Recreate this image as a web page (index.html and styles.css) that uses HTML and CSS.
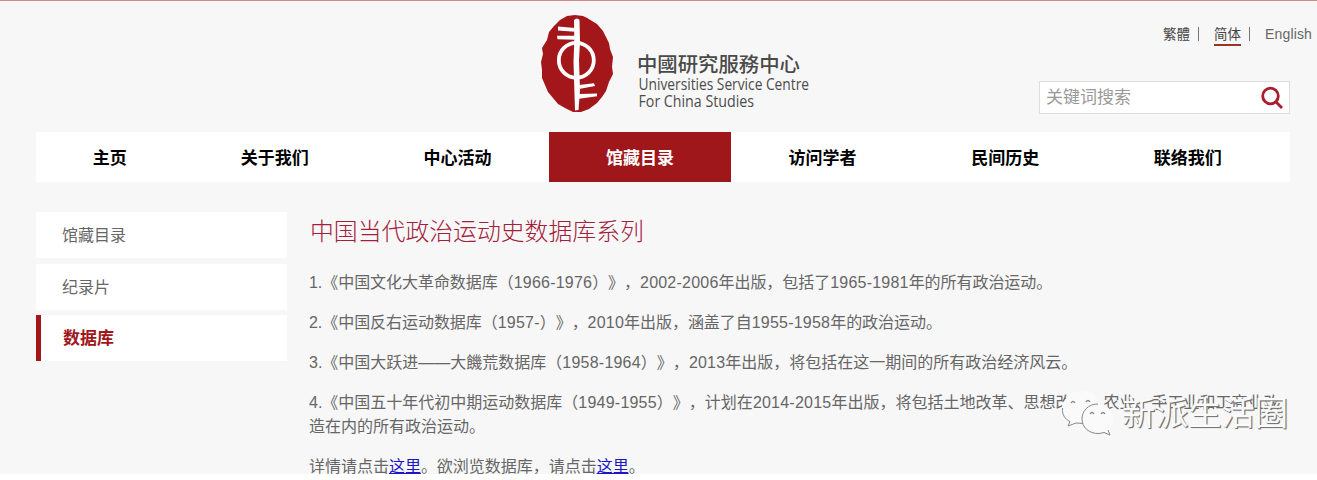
FILE: index.html
```html
<!DOCTYPE html>
<html lang="zh-CN">
<head>
<meta charset="utf-8">
<title>中国当代政治运动史数据库系列</title>
<link rel="stylesheet" href="styles.css">
</head>
<body>
<div class="page">
  <header class="header">
    <svg class="logo" width="290" height="110" viewBox="530 8 290 110">
      <path class="seal" d="M575 15 L583 16 Q588 18 592 21 L597 24 L603 31 L606 37 L609 43 L610 49 L613 57 L612 67 L613 74 L609 82 L606 91 L602 97 L597 103 L589 109 L581 112 L573 112 L565 108 L558 104 L553 98 L548 92 L545 85 L542 78 L542 70 L541 62 L543 54 L542 48 L547 40 L549 32 L554 26 L560 20 L567 16Z"/>
      <circle class="ring" cx="576.3" cy="60.3" r="17.5"/>
      <path class="mark" d="M574 20 Q577 17 579.5 20 L580 42 L579 60 L580 90 L578.5 110 L575 110.5 L574.3 88 L573.5 62 L574.3 40Z M558 26.5 L575 28 L575 31.8 L558 30.6Z M557 35.8 L575 35.5 L575 39.8 L557.5 39.3Z M579 85 L594 83.2 L595 86 L579 89Z M579 94 L597 93.6 L597 96.2 L579 98.8Z"/>
      <text class="logo-zh" x="637" y="72" textLength="163" lengthAdjust="spacingAndGlyphs">中國研究服務中心</text>
      <text class="logo-en" x="638.5" y="89.5" textLength="170.5" lengthAdjust="spacingAndGlyphs">Universities Service Centre</text>
      <text class="logo-en" x="638.5" y="106.5" textLength="115.5" lengthAdjust="spacingAndGlyphs">For China Studies</text>
    </svg>
    <div class="tools">
      <div class="langs"><a>繁體</a><i></i><a class="current">简体</a><i></i><a class="english">English</a></div>
      <div class="search"><span>关键词搜索</span>
        <svg width="24" height="24" viewBox="0 0 24 24"><circle cx="10.5" cy="10" r="7.8"/><path d="M16 16 L22 22"/></svg>
      </div>
    </div>
  </header>
  <nav class="nav">
    <a class="home">主页</a><a>关于我们</a><a>中心活动</a><a class="active">馆藏目录</a><a>访问学者</a><a>民间历史</a><a>联络我们</a>
  </nav>
  <div class="main">
    <aside class="side"><a>馆藏目录</a><a>纪录片</a><a class="selected">数据库</a></aside>
    <article class="article">
      <h1>中国当代政治运动史数据库系列</h1>
      <p>1.《中国文化大革命数据库（<b>1966-1976</b>）》，<b>2002-2006</b>年出版，包括了<b>1965-1981</b>年的所有政治运动。</p>
      <p>2.《中国反右运动数据库（<b>1957-</b>）》，<b>2010</b>年出版，涵盖了自<b>1955-1958</b>年的政治运动。</p>
      <p>3.《中国大跃进——大饑荒数据库（<b>1958-1964</b>）》，<b>2013</b>年出版，将包括在这一期间的所有政治经济风云。</p>
      <p>4.《中国五十年代初中期运动数据库（<b>1949-1955</b>）》，计划在<b>2014-2015</b>年出版，将包括土地改革、思想改造、农业、手工业和工商业改<br>造在内的所有政治运动。</p>
      <p class="more">详情请点击<a>这里</a>。欲浏览数据库，请点击<a>这里</a>。</p>
    </article>
  </div>
  <div class="watermark">
    <svg width="52" height="50" viewBox="1061 387 52 50">
      <path class="bubble" d="M1080 391 C1070 392 1062 400 1062 409 C1062 415 1065 419 1070 422 L1068 426 L1076 423 C1090 426 1100 417 1100 407 C1100 397 1091 390 1080 391Z"/>
      <path class="outline" d="M1062.5 408 C1062 415 1065 419 1070 421.5 L1068 426 L1076 423 L1084 423.5"/>
      <path class="bubble" d="M1098 404 C1088 404 1082 411 1082 419 C1082 427 1089 434 1099 433.5 L1104 432.5 L1110 435 L1108 430 C1112 427 1114 423 1113 417 C1112 409 1106 404 1098 404Z"/>
      <path class="outline" d="M1098 404 C1088 404 1082 411 1082 419 C1082 427 1089 434 1099 433.5 L1104 432.5 L1110 435 L1108 430"/>
      <path class="eyes" d="M1071 403 q2-3 4 0 M1086 402 q2-3 4 0 M1090 414 q2-3 4 0 M1101 414 q2-3 4 0"/>
    </svg>
    <span>新派生活圈</span>
  </div>
</div>
</body>
</html>
```
FILE: styles.css
```css
* { box-sizing: border-box; }
body { margin: 0; background: #fff; font-family: "Liberation Sans", "Noto Sans CJK SC", sans-serif; text-spacing-trim: space-all; }
.page { position: relative; height: 474px; overflow: hidden; background: #f7f7f7; border-top: 1px solid #d58b86; }
.header { display: flex; height: 131px; padding: 7px 0 0 530px; }
.logo { flex: none; }
.seal { fill: #a3171b; }
.ring { fill: none; stroke: #fff; stroke-width: 3.8; }
.mark { fill: #fff; }
.logo-zh { font: 500 20px "Noto Sans CJK TC", sans-serif; fill: #4a4a4a; }
.logo-en { font: 16px "Open Sans", sans-serif; fill: #4c4c4c; }
.tools { flex: 1; padding-top: 15px; }
.langs { display: flex; justify-content: flex-end; padding-right: 5px; height: 58px; font-size: 13.5px; line-height: 23px; color: #444; }
.langs a { height: 23px; }
.langs i { width: 1px; height: 14px; margin: 4px 15px 0 8px; background: #777; }
.langs i + .english { margin-left: 0; }
.langs .current { border-bottom: 2px solid #9a3424; }
.langs .english { font-size: 14px; letter-spacing: 0.15px; color: #666; }
.search { display: flex; justify-content: space-between; align-items: center; width: 251px; height: 33px; margin-left: 219px; padding: 0 5px 0 6px; border: 1px solid #ddd; background: #fff; font-size: 17px; line-height: 24px; color: #999; }
.search svg { fill: none; stroke: #a91c2b; stroke-width: 2.8; }
.nav { display: flex; width: 1254px; height: 50px; margin-left: 36px; background: #fff; }
.nav a { width: 182.6px; font-size: 17px; font-weight: bold; line-height: 53px; text-align: center; color: #000; }
.nav .home { width: 147.5px; }
.nav a.active { background: #9f171b; color: #fff; }
.main { display: flex; gap: 22px; padding: 30px 0 0 36px; }
.side { display: flex; flex-direction: column; gap: 6px; width: 251px; }
.side a { height: 46px; padding-left: 26px; background: #fff; font-size: 16px; line-height: 48px; color: #666; }
.side .selected { margin-top: -1px; padding-left: 22px; border-left: 5px solid #a3171b; font-size: 17px; font-weight: bold; color: #9f171b; }
.article { flex: 1; font-size: 16px; line-height: 24px; color: #666; white-space: nowrap; }
h1 { margin: 0 0 19px; padding-left: 1px; font-size: 23.85px; font-weight: 300; line-height: 40px; color: #a2213a; }
p { margin: 0 0 16px; }
p b { font-weight: normal; letter-spacing: 0.22px; }
p:first-of-type, p:nth-of-type(2) { letter-spacing: -0.05px; }
p a { color: #1a16c5; text-decoration: underline; }
.more { letter-spacing: -0.02px; }
.watermark { position: absolute; left: 1061px; top: 386px; display: flex; gap: 9px; font-size: 33.2px; line-height: 54px; color: #fafafa; text-shadow: 1px 1px 1px #777, 1px 1px 0 #777; white-space: nowrap; }
.bubble { fill: #fafafa; }
.outline { fill: none; stroke: #888; stroke-width: 1; }
.eyes { fill: none; stroke: #888; stroke-width: 1.3; }
```
